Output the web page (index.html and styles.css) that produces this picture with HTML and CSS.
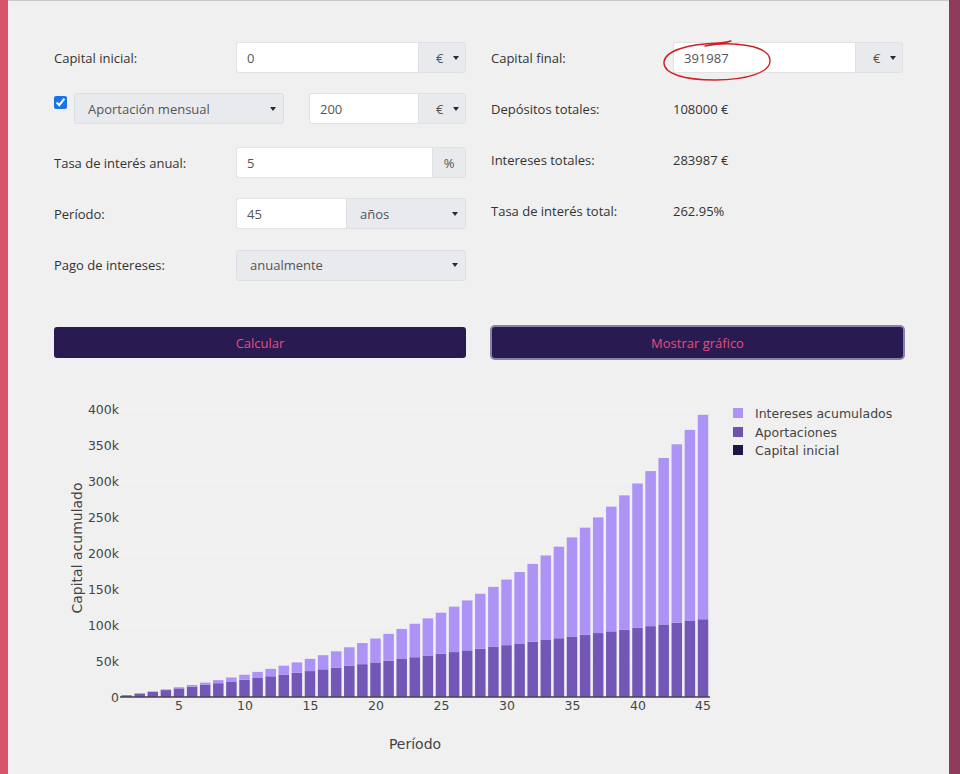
FILE: index.html
```html
<!DOCTYPE html>
<html lang="es">
<head>
<meta charset="utf-8">
<title>Calculadora de interés compuesto</title>
<link rel="stylesheet" href="styles.css">
</head>
<body>
<div class="frame">
  <div class="strip strip-left"></div>
  <main class="content">
    <div class="panel">
      <section class="form-grid">
        <div class="col">
          <div class="row">
            <span class="label">Capital inicial:</span>
            <div class="group field">
              <input class="input" type="text" value="0">
              <div class="addon addon-select"><span>€</span><span class="caret"></span></div>
            </div>
          </div>
          <div class="row row-check">
            <input type="checkbox" class="check" checked>
            <div class="select select-aport"><span>Aportación mensual</span><span class="caret"></span></div>
            <div class="group group-small">
              <input class="input" type="text" value="200">
              <div class="addon addon-select"><span>€</span><span class="caret"></span></div>
            </div>
          </div>
          <div class="row">
            <span class="label">Tasa de interés anual:</span>
            <div class="group field">
              <input class="input" type="text" value="5">
              <div class="addon addon-pct">%</div>
            </div>
          </div>
          <div class="row">
            <span class="label">Período:</span>
            <div class="group field">
              <input class="input input-period" type="text" value="45">
              <div class="select select-join"><span>años</span><span class="caret"></span></div>
            </div>
          </div>
          <div class="row row-last">
            <span class="label">Pago de intereses:</span>
            <div class="select field"><span>anualmente</span><span class="caret"></span></div>
          </div>
        </div>
        <div class="col">
          <div class="row">
            <span class="label">Capital final:</span>
            <div class="group field annotated">
              <input class="input" type="text" value="391987">
              <div class="addon addon-select"><span>€</span><span class="caret"></span></div>
              <svg class="scribble" width="124" height="46" viewBox="0 0 124 46" aria-hidden="true">
                <path d="M44 7 C 70 2, 108 6, 109 21 C 110 34, 84 41, 54 41 C 24 41, 2 35, 3 23 C 4 12, 26 5, 58 4 C 63 3.8, 67 3, 70 2" fill="none" stroke="#d21f24" stroke-width="1.4" stroke-linecap="round"/>
              </svg>
            </div>
          </div>
          <div class="row">
            <span class="label">Depósitos totales:</span>
            <span class="value">108000 €</span>
          </div>
          <div class="row">
            <span class="label">Intereses totales:</span>
            <span class="value">283987 €</span>
          </div>
          <div class="row">
            <span class="label">Tasa de interés total:</span>
            <span class="value">262.95%</span>
          </div>
        </div>
      </section>
      <section class="actions">
        <button class="btn" type="button">Calcular</button>
        <button class="btn btn-focus" type="button">Mostrar gráfico</button>
      </section>
    </div>
    <svg class="chart" width="941" height="394" viewBox="8 380 941 394">
      <g class="grid">
        <line x1="120" y1="661" x2="710" y2="661"/>
        <line x1="120" y1="625" x2="710" y2="625"/>
        <line x1="120" y1="589" x2="710" y2="589"/>
        <line x1="120" y1="553" x2="710" y2="553"/>
        <line x1="120" y1="517" x2="710" y2="517"/>
        <line x1="120" y1="481" x2="710" y2="481"/>
        <line x1="120" y1="445" x2="710" y2="445"/>
        <line x1="120" y1="409" x2="710" y2="409"/>
      </g>
      <g id="bars"></g>
      <line class="axis" x1="120" y1="697" x2="710" y2="697"/>
      <g class="ytick">
        <text x="119" y="701.5">0</text>
        <text x="119" y="665.5">50k</text>
        <text x="119" y="629.5">100k</text>
        <text x="119" y="593.5">150k</text>
        <text x="119" y="557.5">200k</text>
        <text x="119" y="521.5">250k</text>
        <text x="119" y="485.5">300k</text>
        <text x="119" y="449.5">350k</text>
        <text x="119" y="413.5">400k</text>
      </g>
      <g class="xtick">
        <text x="179" y="710">5</text>
        <text x="245" y="710">10</text>
        <text x="310.5" y="710">15</text>
        <text x="376" y="710">20</text>
        <text x="441.5" y="710">25</text>
        <text x="507" y="710">30</text>
        <text x="572.5" y="710">35</text>
        <text x="638" y="710">40</text>
        <text x="703" y="710">45</text>
      </g>
      <text class="axis-title" x="415" y="749">Período</text>
      <text class="axis-title" transform="translate(82 548) rotate(-90)">Capital acumulado</text>
      <g class="legend">
        <rect x="733" y="408" width="10" height="10" fill="#ad93f5"/>
        <text x="755" y="417.5">Intereses acumulados</text>
        <rect x="733" y="427" width="10" height="10" fill="#6f54ae"/>
        <text x="755" y="436.5">Aportaciones</text>
        <rect x="733" y="445" width="10" height="10" fill="#1f1646"/>
        <text x="755" y="454.5">Capital inicial</text>
      </g>
    </svg>
  </main>
  <div class="strip strip-right"></div>
</div>
<script src="script.js"></script>
</body>
</html>
```

FILE: styles.css
```css
* { box-sizing: border-box; }

html, body {
  margin: 0;
  padding: 0;
  background: #f0f0f0;
}

.frame {
  display: flex;
  width: 960px;
  height: 774px;
  overflow: hidden;
}

.strip { flex: none; }
.strip-left { width: 8px; background: #d8546a; }
.strip-right { width: 11px; background: #8d3a5b; }

.content {
  flex: 1;
  min-width: 0;
  background: #f0f0f0;
  border-top: 1px solid #c9c9c9;
  font-family: "Open Sans", "Liberation Sans", sans-serif;
  font-size: 13px;
  color: #333;
}

.panel {
  padding: 41px 46px 0;
}

.form-grid {
  display: grid;
  grid-template-columns: 412px 412px;
  column-gap: 25px;
}

.col {
  display: flex;
  flex-direction: column;
  gap: 20px;
}

.row {
  display: flex;
  align-items: center;
  height: 31px;
}

.row-check {
  height: 34px;
  align-items: flex-start;
}

.row-last { height: 32px; }

.label {
  width: 182px;
  flex: none;
}

.value { color: #333; }

.field { width: 230px; height: 31px; }

.group {
  display: flex;
  position: relative;
}

.input {
  flex: 1;
  min-width: 0;
  height: 31px;
  margin: 0;
  border: 1px solid #e3e3e3;
  border-right: none;
  border-radius: 3px 0 0 3px;
  background: #fff;
  padding: 0 10px;
  font-family: inherit;
  font-size: 13px;
  color: #555;
  outline: none;
}

.input-period { flex: none; width: 110px; }

.addon {
  flex: none;
  display: flex;
  align-items: center;
  height: 31px;
  background: #e8eaed;
  border: 1px solid #dfe1e5;
  border-radius: 0 3px 3px 0;
  color: #555;
}

.addon-select {
  width: 48px;
  padding: 0 6px 0 17px;
  justify-content: space-between;
}

.addon-pct {
  width: 34px;
  justify-content: center;
}

.select {
  display: flex;
  align-items: center;
  justify-content: space-between;
  height: 31px;
  padding: 0 7px 0 13px;
  background: #e8eaed;
  border: 1px solid #dcdfe3;
  border-radius: 3px;
  color: #555;
}

.select-join {
  flex: 1;
  border-radius: 0 3px 3px 0;
}

.select-aport {
  width: 210px;
  flex: none;
  margin-right: 25px;
}

.group-small { width: 157px; height: 31px; }

.caret {
  width: 0;
  height: 0;
  border-left: 3px solid transparent;
  border-right: 3px solid transparent;
  border-top: 4px solid #2a2a2a;
}

.check {
  width: 13px;
  height: 13px;
  margin: 3px 7px 0 0;
  accent-color: #1a73e8;
  flex: none;
}

.annotated { overflow: visible; }

.scribble {
  position: absolute;
  left: -12px;
  top: -3px;
  pointer-events: none;
}

.actions {
  display: grid;
  grid-template-columns: 412px 412px;
  column-gap: 25px;
  margin-top: 46px;
}

.btn {
  height: 31px;
  border: none;
  border-radius: 3px;
  background: #2a1a52;
  color: #e64d7d;
  font-family: "Open Sans", "Liberation Sans", sans-serif;
  font-size: 13px;
  cursor: pointer;
}

.btn-focus {
  margin-left: 1px;
  box-shadow: 0 0 0 2px #8a80a9;
}

.chart {
  display: block;
  margin-top: 22px;
  font-family: "DejaVu Sans", Verdana, sans-serif;
}

.chart .grid line {
  stroke: #f3f3f3;
  stroke-width: 1;
}

.chart .axis {
  stroke: #444;
  stroke-width: 1.5;
}

.chart .ytick text {
  font-size: 12.5px;
  fill: #444;
  text-anchor: end;
}

.chart .xtick text {
  font-size: 12.5px;
  fill: #444;
  text-anchor: middle;
}

.chart .axis-title {
  font-size: 14px;
  fill: #444;
  text-anchor: middle;
}

.chart .legend text {
  font-size: 12.5px;
  fill: #444;
}
```

FILE: script.js
```js
(function () {
  var ns = 'http://www.w3.org/2000/svg';
  var g = document.getElementById('bars');
  var perYear = 2454.45;
  var rate = 0.05;
  var k = 36 / 50000;
  var base = 697;
  var w = 10.5;
  function rect(x, y, h, fill) {
    var r = document.createElementNS(ns, 'rect');
    r.setAttribute('x', x.toFixed(2));
    r.setAttribute('y', y.toFixed(2));
    r.setAttribute('width', w);
    r.setAttribute('height', Math.max(h, 0).toFixed(2));
    r.setAttribute('fill', fill);
    g.appendChild(r);
  }
  for (var n = 1; n <= 45; n++) {
    var total = perYear * (Math.pow(1 + rate, n) - 1) / rate;
    var dep = 2400 * n;
    var cx = 126.6 + (n - 1) * 13.1;
    var x = cx - w / 2;
    var hDep = dep * k;
    var hTot = total * k;
    rect(x, base - hDep, hDep, '#7357b6');
    rect(x, base - hTot, hTot - hDep, '#ad93f6');
  }
})();
```
